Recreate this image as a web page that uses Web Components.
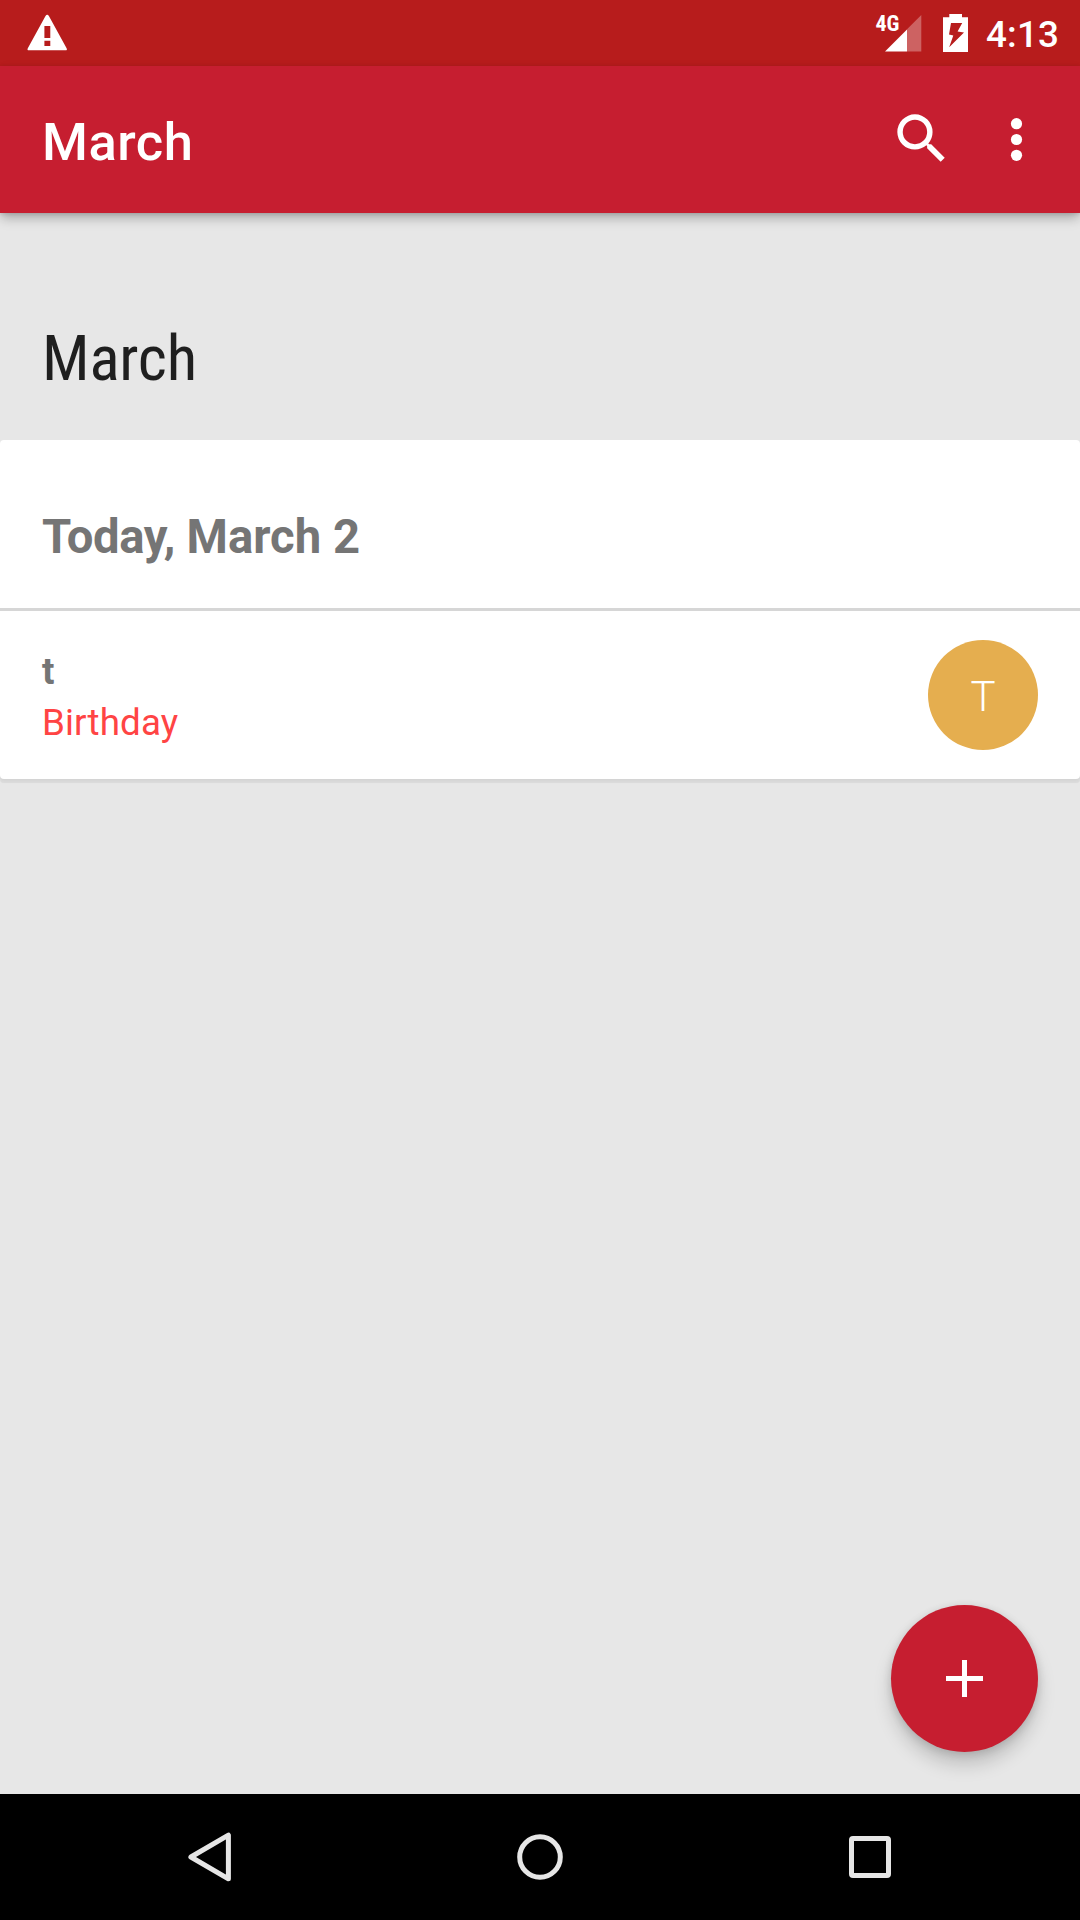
<!DOCTYPE html>
<html lang="en">
<head>
<meta charset="utf-8">
<title>March</title>
<style>
html,body{margin:0;padding:0}
body{width:1080px;height:1920px;overflow:hidden;font-family:Roboto,sans-serif;background:#e7e7e7}
</style>
</head>
<body>
<birthday-app></birthday-app>
<script>
const define = (name, html) => customElements.define(name, class extends HTMLElement {
  constructor() {
    super();
    const t = document.createElement('template');
    t.innerHTML = html;
    this.attachShadow({ mode: 'open' }).appendChild(t.content.cloneNode(true));
  }
});

define('status-bar', `
<style>
:host{display:flex;height:66px;background:#b71c1c;color:#fff;flex:none;justify-content:space-between}
svg{display:block;flex:none}
.right{display:flex}
.signal{position:relative;width:60px;height:66px}
.net{position:absolute;left:5.5px;top:10.5px;font:700 22px/26px "Roboto Condensed",Roboto,sans-serif}
.clock{font-size:36.75px;font-weight:500;line-height:66px;padding-top:1.5px;width:94px;letter-spacing:.2px}
</style>
<svg width="80" height="66"><path fill="#fff" fill-rule="evenodd" d="M45.5 15.9Q47.2 13.5 48.9 15.9L66.6 48.2Q67.6 50.3 65.6 50.3H28.8Q26.8 50.3 27.8 48.2ZM44.4 26V38H50.3V26ZM44.4 40.7V46H50.3V40.7Z"/></svg>
<div class="right">
 <div class="signal">
  <svg width="60" height="66"><path fill="#fff" fill-opacity=".31" d="M37 29.2L51.3 15V51.5H37Z"/><path fill="#fff" d="M15 51.5L37 29.5V51.5Z"/></svg>
  <span class="net">4G</span>
 </div>
 <svg width="56" height="66"><path fill="#fff" fill-rule="evenodd" d="M19.3 14H32V17.3H38V52H13V17.3H19.3ZM21 23L19 34.4L23.3 35.4L19.2 47.3L34 32.6L27.6 31.6L32.2 23Z"/></svg>
 <span class="clock">4:13</span>
</div>`);

define('app-bar', `
<style>
:host{display:flex;height:147px;flex:none;background:#c61e30;color:#fff;position:relative;z-index:1;box-shadow:0 6px 11px -1px rgba(0,0,0,.27),0 1px 4px rgba(0,0,0,.12);justify-content:space-between}
.title{font-size:52.5px;font-weight:500;line-height:147px;padding:2.5px 0 0 42px;letter-spacing:.5px}
svg{display:block}
</style>
<span class="title"><slot></slot></span>
<svg width="210" height="147" fill="#fff"><g transform="translate(19.2 40.2) scale(2.71)"><path d="M15.5 14h-.79l-.28-.27A6.471 6.471 0 0 0 16 9.5 6.5 6.5 0 1 0 9.5 16c1.61 0 3.09-.59 4.23-1.57l.27.28v.79l5 4.99L20.49 19zm-6 0a4.5 4.5 0 1 1 0-9 4.5 4.5 0 0 1 0 9z"/></g><circle cx="146.5" cy="57.7" r="5.6"/><circle cx="146.5" cy="73.5" r="5.6"/><circle cx="146.5" cy="89.3" r="5.6"/></svg>`);

define('month-heading', `
<style>
:host{display:block;height:227px;box-sizing:border-box;padding:108.5px 42px 0;color:#1f1f1f;font:400 63px/74px "Roboto Condensed",Roboto,sans-serif;letter-spacing:-.2px}
</style><slot></slot>`);

define('day-card', `
<style>
:host{display:block;height:339px;background:#fff;border-radius:4px;box-shadow:0 4px 1px rgba(0,0,0,.06),0 1px 2px rgba(0,0,0,.03)}
header{box-sizing:border-box;height:171px;padding:69px 42px 0;border-bottom:3px solid #d6d6d6;font-size:47.25px;line-height:56px;font-weight:700;color:#757575}
</style><header><slot name="date"></slot></header><slot></slot>`);

define('contact-avatar', `
<style>
:host{display:block;width:110px;height:110px;flex:none;border-radius:50%;background:#e5ae4f;color:#fff;text-align:center;font-size:42px;font-weight:300;line-height:113px}
</style><slot></slot>`);

define('event-row', `
<style>
:host{display:flex;justify-content:space-between;padding:29px 42px 0;font-size:36.75px}
.text{display:flex;flex-direction:column;padding-top:10px}
.name{font-weight:700;color:#757575;line-height:43px}
.kind{color:#ff4444;line-height:43px;padding-top:8px;letter-spacing:.12px}
</style><div class="text"><span class="name"><slot name="name"></slot></span><span class="kind"><slot name="kind"></slot></span></div><slot></slot>`);

define('add-button', `
<style>
:host{display:block;width:147px;height:147px;border-radius:50%;background:#c61e30;box-shadow:0 13px 18px rgba(0,0,0,.17),0 2px 9px rgba(0,0,0,.14)}
svg{display:block}
</style><svg width="147" height="147"><path fill="#fff" d="M71 55H76V71H92V76H76V92H71V76H55V71H71Z"/></svg>`);

define('nav-bar', `
<style>
:host{display:flex;height:126px;flex:none;background:#000;justify-content:center;gap:230px;align-items:center;position:relative;z-index:1}
svg{display:block;fill:none;stroke:#e6e6e6;stroke-width:5}
</style>
<svg width="100" height="126"><path stroke-linejoin="round" d="M30.9 63L68.4 41.2V84.8Z"/></svg>
<svg width="100" height="126"><circle cx="50" cy="63" r="20.3"/></svg>
<svg width="100" height="126"><path stroke="none" fill="#e6e6e6" fill-rule="evenodd" d="M33 42H67Q71 42 71 46V80Q71 84 67 84H33Q29 84 29 80V46Q29 42 33 42ZM34 47V79H66V47Z"/></svg>`);

define('birthday-app', `
<style>
:host{display:flex;flex-direction:column;width:1080px;height:1920px;background:#e7e7e7}
main{flex:1;position:relative}
.day{letter-spacing:-.45px}
add-button{position:absolute;right:42px;bottom:42px}
</style>
<status-bar></status-bar>
<app-bar>March</app-bar>
<main>
 <month-heading>March</month-heading>
 <day-card><span slot="date"><span class="day">Today,</span> March 2</span>
  <event-row><span slot="name">t</span><span slot="kind">Birthday</span><contact-avatar>T</contact-avatar></event-row>
 </day-card>
 <add-button></add-button>
</main>
<nav-bar></nav-bar>`);
</script>
</body>
</html>
